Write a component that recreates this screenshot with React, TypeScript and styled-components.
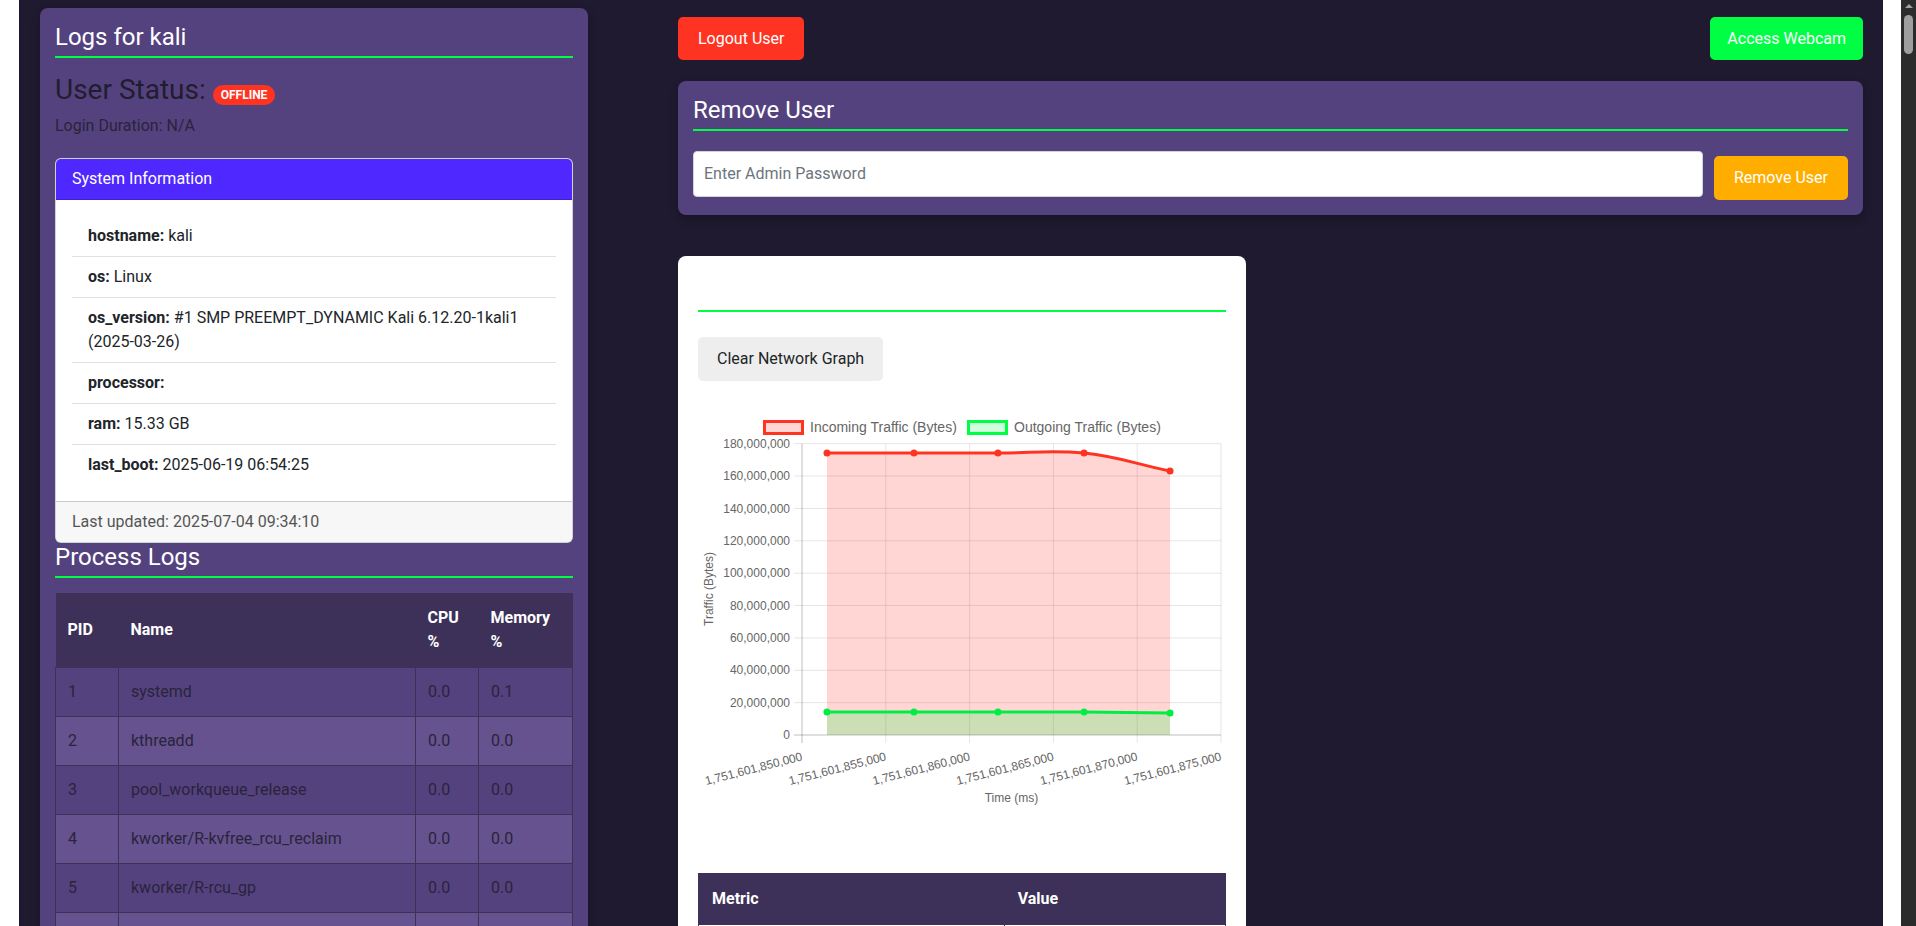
import React from "react";
import styled, { createGlobalStyle } from "styled-components";

const GlobalStyle = createGlobalStyle`
  html { color-scheme: dark; }
  body {
    margin: 0;
    background: #ffffff;
    font-family: Roboto, "Noto Sans", sans-serif;
    font-size: 16px;
    line-height: 24px;
    color: #212529;
  }
  * { box-sizing: border-box; }
`;

const Page = styled.div`
  margin: 0 33px 0 19px;
  min-height: 1400px;
  background: #1f1a30;
  padding: 8px 20px 40px 21px;
  display: flex;
  align-items: flex-start;
  gap: 90px;
`;

const ScrollTrack = styled.div`
  position: fixed;
  top: 0;
  right: 0;
  width: 15px;
  height: 100vh;
  background: #2b2b2b;
`;

const ScrollArrow = styled.div`
  position: absolute;
  top: 4px;
  left: 4px;
  width: 0;
  height: 0;
  border-left: 4px solid transparent;
  border-right: 4px solid transparent;
  border-bottom: 4px solid #a0a0a0;
`;

const ScrollThumb = styled.div`
  position: absolute;
  top: 15px;
  left: 3px;
  width: 9px;
  height: 39px;
  border-radius: 5px;
  background: #9e9e9e;
`;

const Panel = styled.section`
  background: #54427f;
  border-radius: 8px;
  padding: 15px;
  box-shadow: 0 4px 10px rgba(0, 0, 0, 0.25);
`;

const LeftPanel = styled(Panel)`
  width: 548px;
  flex-shrink: 0;
`;

const SectionTitle = styled.h4`
  margin: 0;
  font-size: 24px;
  font-weight: 400;
  line-height: 1.2;
  color: #ffffff;
  padding-bottom: 4px;
  border-bottom: 2px solid #00ff44;
`;

const StatusTitle = styled.h3`
  margin: 15px 0 8px;
  font-size: 28px;
  font-weight: 400;
  line-height: 1.2;
  color: #211d2e;
`;

const Badge = styled.span`
  display: inline-block;
  padding: 4px 8px;
  font-size: 12px;
  font-weight: 700;
  line-height: 1;
  color: #fff;
  background: #ff3322;
  border-radius: 10px;
  vertical-align: baseline;
`;

const Duration = styled.p`
  margin: 0 0 20px;
  color: #29243a;
`;

const InfoCard = styled.div`
  background: #fff;
  border: 1px solid rgba(0, 0, 0, 0.175);
  border-radius: 6px;
  overflow: hidden;
`;

const CardHeader = styled.div`
  background: #4f27ff;
  color: #fff;
  padding: 8px 16px;
  border-bottom: 1px solid rgba(0, 0, 0, 0.175);
`;

const CardBody = styled.div`
  padding: 16px;
`;

const InfoList = styled.ul`
  list-style: none;
  margin: 0;
  padding: 0;
`;

const InfoItem = styled.li`
  padding: 8px 16px;
  border-bottom: 1px solid #dee2e6;
  &:last-child { border-bottom: none; }
  b { font-weight: 700; }
`;

const CardFooter = styled.div`
  background: #f7f7f7;
  color: #555;
  padding: 8px 16px;
  border-top: 1px solid rgba(0, 0, 0, 0.175);
`;

const DataTable = styled.table`
  width: 100%;
  margin-top: 15px;
  border-collapse: collapse;
  table-layout: fixed;
`;

const HeadCell = styled.th<{ $w?: number }>`
  width: ${(p) => (p.$w ? `${p.$w}px` : "auto")};
  background: #3d3159;
  color: #fff;
  font-weight: 700;
  text-align: left;
  vertical-align: middle;
  padding: 13px 12px;
  line-height: 24px;
`;

const ProcRow = styled.tr`
  background: #54427f;
  &:nth-child(even) { background: #65528f; }
`;

const ProcCell = styled.td`
  padding: 12px;
  border: 1px solid #3d3159;
  color: #29243a;
  white-space: nowrap;
  overflow: hidden;
`;

const RightColumn = styled.div`
  flex: 1;
  min-width: 0;
  padding-top: 9px;
  display: flex;
  flex-direction: column;
  align-items: stretch;
`;

const TopBar = styled.div`
  display: flex;
  justify-content: space-between;
  align-items: center;
`;

const ActionButton = styled.button<{ $bg: string; $pad?: number }>`
  height: 43px;
  padding: 0 ${(p) => p.$pad ?? 20}px;
  border: none;
  border-radius: 5px;
  background: ${(p) => p.$bg};
  color: #fff;
  font-family: inherit;
  font-size: 16px;
`;

const RemovePanel = styled(Panel)`
  margin-top: 21px;
`;

const RemoveRow = styled.div`
  display: flex;
  align-items: flex-start;
  gap: 11px;
  margin-top: 20px;
`;

const PasswordInput = styled.input`
  flex: 1;
  height: 46px;
  border: 1px solid #ced4da;
  border-radius: 4px;
  padding: 0 10px;
  background: #fff;
  color: #212529;
  font-family: inherit;
  font-size: 16px;
  &::placeholder { color: #6c757d; }
`;

const RemoveButton = styled(ActionButton)`
  margin-top: 5px;
  height: 44px;
`;

const ChartCard = styled.div`
  margin-top: 41px;
  width: 568px;
  background: #fff;
  border-radius: 8px;
  padding: 21px 20px 20px;
  display: flex;
  flex-direction: column;
  align-items: flex-start;
`;

const FullTitle = styled(SectionTitle)`
  align-self: stretch;
`;

const ClearButton = styled.button`
  margin-top: 25px;
  height: 44px;
  padding: 0 19px;
  border: none;
  border-radius: 5px;
  background: #eeeeee;
  color: #212529;
  font-family: inherit;
  font-size: 16px;
`;

const ChartSvg = styled.svg`
  display: block;
  margin-top: 29px;
  font-family: "Liberation Sans", Arial, sans-serif;
`;

const MetricTable = styled.table`
  margin-top: 53px;
  width: 100%;
  border-collapse: collapse;
`;

const MetricHead = styled.th<{ $w?: string }>`
  width: ${(p) => p.$w ?? "auto"};
  background: #3d3159;
  color: #fff;
  font-weight: 700;
  text-align: left;
  padding: 13px 13px;
  border: 1px solid #3d3159;
`;

const MetricCell = styled.td`
  padding: 12px 13px;
  border: 1px solid #3d3159;
  color: #212529;
`;

const processes = [
  ["1", "systemd", "0.0", "0.1"],
  ["2", "kthreadd", "0.0", "0.0"],
  ["3", "pool_workqueue_release", "0.0", "0.0"],
  ["4", "kworker/R-kvfree_rcu_reclaim", "0.0", "0.0"],
  ["5", "kworker/R-rcu_gp", "0.0", "0.0"],
  ["6", "kworker/R-sync_wq", "0.0", "0.0"],
  ["7", "kworker/R-slub_flushwq", "0.0", "0.0"],
  ["8", "kworker/R-netns", "0.0", "0.0"],
  ["10", "kworker/0:0H-events_highpri", "0.0", "0.0"],
  ["13", "kworker/R-mm_percpu_wq", "0.0", "0.0"],
];

const info: [string, string][] = [
  ["hostname", "kali"],
  ["os", "Linux"],
  ["os_version", "#1 SMP PREEMPT_DYNAMIC Kali 6.12.20-1kali1 (2025-03-26)"],
  ["processor", ""],
  ["ram", "15.33 GB"],
  ["last_boot", "2025-06-19 06:54:25"],
];

// ---------- chart ----------
const T0 = 1751601850000;
const PL = 104, PR = 523, PT = 33.7, PB = 325;
const xs = (t: number) => PL + ((t - T0) / 25000) * (PR - PL);
const ys = (v: number) => PB - (v / 180e6) * (PB - PT);
const times = [1751601851490, 1751601856680, 1751601861690, 1751601866830, 1751601871960];
const incoming = [174.2e6, 174.2e6, 174.2e6, 174.2e6, 163.1e6];
const outgoing = [14.2e6, 14.2e6, 14.2e6, 14.2e6, 13.6e6];

type Pt = { x: number; y: number };
function splinePath(pts: Pt[], tension = 0.4): string {
  const cps = pts.map((cur, i) => {
    const prev = pts[i - 1] ?? cur;
    const next = pts[i + 1] ?? cur;
    const d01 = Math.hypot(cur.x - prev.x, cur.y - prev.y);
    const d12 = Math.hypot(next.x - cur.x, next.y - cur.y);
    const sum = d01 + d12 || 1;
    const fa = tension * (d01 / sum);
    const fb = tension * (d12 / sum);
    return {
      p: { x: cur.x - fa * (next.x - prev.x), y: cur.y - fa * (next.y - prev.y) },
      n: { x: cur.x + fb * (next.x - prev.x), y: cur.y + fb * (next.y - prev.y) },
    };
  });
  let d = `M${pts[0].x},${pts[0].y}`;
  for (let i = 1; i < pts.length; i++) {
    const a = cps[i - 1].n;
    const b = cps[i].p;
    d += ` C${a.x},${a.y} ${b.x},${b.y} ${pts[i].x},${pts[i].y}`;
  }
  return d;
}

const TrafficChart: React.FC = () => {
  const inPts = times.map((t, i) => ({ x: xs(t), y: ys(incoming[i]) }));
  const outPts = times.map((t, i) => ({ x: xs(t), y: ys(outgoing[i]) }));
  const inLine = splinePath(inPts);
  const outLine = splinePath(outPts);
  const first = inPts[0].x;
  const last = inPts[inPts.length - 1].x;
  const inArea = `${inLine} L${last},${PB} L${first},${PB} Z`;
  const outArea = `${outLine} L${last},${PB} L${first},${PB} Z`;
  const yTicks = Array.from({ length: 10 }, (_, i) => i * 20e6);
  const xTicks = Array.from({ length: 6 }, (_, i) => T0 + i * 5000);
  const fmt = (n: number) => n.toLocaleString("en-US");
  return (
    <ChartSvg width={529} height={410} viewBox="0 0 529 410">
      <rect x={66.5} y={11.5} width={38} height={12} fill="rgba(255,51,34,0.2)" stroke="#ff3322" strokeWidth={3} />
      <text x={112} y={17.5} dy="0.35em" fontSize={14} fill="#666">Incoming Traffic (Bytes)</text>
      <rect x={270.5} y={11.5} width={38} height={12} fill="rgba(0,255,68,0.2)" stroke="#00ff44" strokeWidth={3} />
      <text x={316} y={17.5} dy="0.35em" fontSize={14} fill="#666">Outgoing Traffic (Bytes)</text>

      {yTicks.map((v) => (
        <g key={v}>
          <line x1={96} x2={PR} y1={ys(v)} y2={ys(v)} stroke={v === 0 ? "rgba(0,0,0,0.25)" : "rgba(0,0,0,0.1)"} />
          <text x={92} y={ys(v)} dy="0.35em" textAnchor="end" fontSize={12} fill="#666">{fmt(v)}</text>
        </g>
      ))}
      {xTicks.map((t, i) => (
        <g key={t}>
          <line x1={xs(t)} x2={xs(t)} y1={PT} y2={PB + 8} stroke={i === 0 ? "rgba(0,0,0,0.25)" : "rgba(0,0,0,0.1)"} />
          <text
            x={xs(t)}
            y={346}
            dy="0.35em"
            textAnchor="end"
            fontSize={12}
            fill="#666"
            transform={`rotate(-14.5 ${xs(t)} 346)`}
          >
            {fmt(t)}
          </text>
        </g>
      ))}

      <path d={inArea} fill="rgba(255,51,34,0.2)" />
      <path d={outArea} fill="rgba(0,255,68,0.2)" />
      <path d={inLine} fill="none" stroke="#ff3322" strokeWidth={3} />
      <path d={outLine} fill="none" stroke="#00ee44" strokeWidth={3} />
      {inPts.map((p, i) => <circle key={`i${i}`} cx={p.x} cy={p.y} r={3.5} fill="#ff3322" />)}
      {outPts.map((p, i) => <circle key={`o${i}`} cx={p.x} cy={p.y} r={3.5} fill="#00ee44" />)}

      <text x={313.5} y={388} dy="0.35em" textAnchor="middle" fontSize={12} fill="#666">Time (ms)</text>
      <text x={11} y={179} dy="0.35em" textAnchor="middle" fontSize={12} fill="#666" transform="rotate(-90 11 179)">
        Traffic (Bytes)
      </text>
    </ChartSvg>
  );
};

const metrics = [
  ["Bytes Sent", "14,203,114"],
  ["Bytes Received", "163,112,908"],
  ["Packets Sent", "98,213"],
  ["Packets Received", "141,877"],
];

export default function App() {
  return (
    <>
      <GlobalStyle />
      <Page>
        <LeftPanel>
          <SectionTitle>Logs for kali</SectionTitle>
          <StatusTitle>
            User Status: <Badge>OFFLINE</Badge>
          </StatusTitle>
          <Duration>Login Duration: N/A</Duration>
          <InfoCard>
            <CardHeader>System Information</CardHeader>
            <CardBody>
              <InfoList>
                {info.map(([k, v]) => (
                  <InfoItem key={k}>
                    <b>{k}:</b> {v}
                  </InfoItem>
                ))}
              </InfoList>
            </CardBody>
            <CardFooter>Last updated: 2025-07-04 09:34:10</CardFooter>
          </InfoCard>
          <SectionTitle>Process Logs</SectionTitle>
          <DataTable>
            <thead>
              <tr>
                <HeadCell $w={63}>PID</HeadCell>
                <HeadCell $w={297}>Name</HeadCell>
                <HeadCell $w={63}>CPU %</HeadCell>
                <HeadCell>Memory %</HeadCell>
              </tr>
            </thead>
            <tbody>
              {processes.map((r) => (
                <ProcRow key={r[0]}>
                  {r.map((c, i) => (
                    <ProcCell key={i}>{c}</ProcCell>
                  ))}
                </ProcRow>
              ))}
            </tbody>
          </DataTable>
        </LeftPanel>

        <RightColumn>
          <TopBar>
            <ActionButton $bg="#ff3322">Logout User</ActionButton>
            <ActionButton $bg="#00ff44" $pad={17}>Access Webcam</ActionButton>
          </TopBar>
          <RemovePanel>
            <SectionTitle>Remove User</SectionTitle>
            <RemoveRow>
              <PasswordInput type="password" placeholder="Enter Admin Password" />
              <RemoveButton $bg="#ffae00">Remove User</RemoveButton>
            </RemoveRow>
          </RemovePanel>
          <ChartCard>
            <FullTitle>&nbsp;</FullTitle>
            <ClearButton>Clear Network Graph</ClearButton>
            <TrafficChart />
            <MetricTable>
              <thead>
                <tr>
                  <MetricHead $w="58%">Metric</MetricHead>
                  <MetricHead>Value</MetricHead>
                </tr>
              </thead>
              <tbody>
                {metrics.map(([m, v]) => (
                  <tr key={m}>
                    <MetricCell>{m}</MetricCell>
                    <MetricCell>{v}</MetricCell>
                  </tr>
                ))}
              </tbody>
            </MetricTable>
          </ChartCard>
        </RightColumn>
      </Page>
      <ScrollTrack aria-hidden>
        <ScrollArrow />
        <ScrollThumb />
      </ScrollTrack>
    </>
  );
}
